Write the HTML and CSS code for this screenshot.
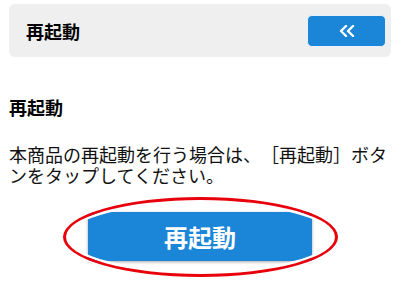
FILE: index.html
```html
<!DOCTYPE html>
<html lang="ja">
<head>
<meta charset="utf-8">
<link rel="stylesheet" href="styles.css">
</head>
<body>
<div class="page">
  <div class="panel">
    <span class="panel-title">再起動</span>
    <button class="back-btn" type="button" aria-label="戻る">
      <svg width="16" height="12" viewBox="0 0 16 12"><polyline points="7,1 2,6 7,11" fill="none" stroke="#fff" stroke-width="2.4" stroke-linecap="round" stroke-linejoin="round"/><polyline points="14,1 9,6 14,11" fill="none" stroke="#fff" stroke-width="2.4" stroke-linecap="round" stroke-linejoin="round"/></svg>
    </button>
  </div>
  <h2 class="section-title">再起動</h2>
  <p class="desc">本商品の再起動を行う場合は、［再起動］ボタンをタップしてください。</p>
  <div class="action">
    <div class="action-wrap">
      <button class="restart-btn" type="button">再起動</button>
      <div class="ring"></div>
    </div>
  </div>
</div>
</body>
</html>
```
FILE: styles.css
```css
html, body {
  margin: 0;
  padding: 0;
  background: #fff;
}
body {
  font-family: "Noto Sans CJK JP", "Noto Sans", sans-serif;
  color: #111;
}
.page {
  padding: 4px 9px 0 9px;
  min-height: 288px;
  box-sizing: border-box;
}
.panel {
  height: 53px;
  background: #efefef;
  border-radius: 6px;
  display: flex;
  align-items: center;
  justify-content: space-between;
  padding: 0 5px 0 17px;
  box-sizing: border-box;
}
.panel-title {
  font-size: 18px;
  font-weight: bold;
  line-height: 22px;
  color: #000;
}
.back-btn {
  width: 79px;
  height: 32px;
  margin-top: 1px;
  border: 1px solid #e6f1fb;
  border-radius: 5px;
  background: #1b86d8;
  display: flex;
  align-items: center;
  justify-content: center;
  padding: 0;
}
.back-btn svg {
  display: block;
}
.section-title {
  margin: 39px 0 0 0;
  font-size: 18px;
  font-weight: bold;
  line-height: 22px;
  color: #000;
}
.desc {
  margin: 26px 0 0 0;
  font-size: 18px;
  line-height: 21px;
  color: #111;
  text-spacing-trim: space-all;
}
.action {
  display: flex;
  justify-content: center;
  margin-top: 26px;
}
.action-wrap {
  position: relative;
  width: 224px;
  height: 49px;
}
.restart-btn {
  width: 224px;
  height: 49px;
  border: none;
  padding: 0;
  background: #1b86d8;
  color: #fff;
  font-family: "Noto Sans CJK JP", "Noto Sans", sans-serif;
  font-size: 24px;
  font-weight: bold;
  line-height: 49px;
  box-shadow: 0 1px 3px rgba(0, 0, 0, 0.35);
  display: block;
}
.ring {
  position: absolute;
  left: -25px;
  top: -15px;
  width: 275px;
  height: 80px;
  box-sizing: border-box;
  border: 3px solid #e8000b;
  border-radius: 50%;
  box-shadow: 0 0 0 2px #fff, inset 0 0 0 3px #fff;
  pointer-events: none;
}
```
